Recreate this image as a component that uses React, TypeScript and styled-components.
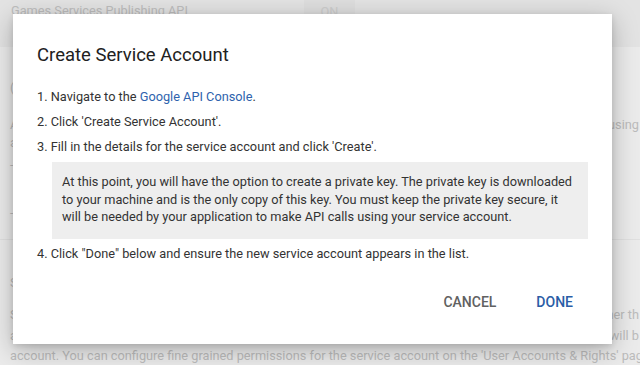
import React from 'react'
import styled, { createGlobalStyle } from 'styled-components'

const GlobalStyle = createGlobalStyle`
  html, body {
    margin: 0;
    padding: 0;
    width: 640px;
    height: 365px;
    overflow: hidden;
    background: #ebebeb;
    font-family: Roboto, 'Noto Sans', 'Liberation Sans', sans-serif;
  }
`

const Page = styled.div`
  position: relative;
  width: 640px;
  height: 365px;
  overflow: hidden;
  background: #ebebeb;
  color: #bcbcbc;
  font-size: 12.75px;
`

const ApiRow = styled.div`
  display: flex;
  align-items: flex-start;
  height: 47px;
  padding-left: 11px;
  background: #e3e3e3;
  box-sizing: border-box;
`

const ApiName = styled.span`
  width: 293px;
  line-height: 22px;
  color: #bdbdbd;
`

const OnCell = styled.span`
  display: flex;
  justify-content: center;
  width: 51px;
  height: 47px;
  line-height: 24px;
  background: #dedede;
  color: #cdcdcd;
`

const Section = styled.div`
  height: 193px;
  padding-left: 10px;
  border-bottom: 1px solid #e0e0e0;
  box-sizing: border-box;
  display: flex;
  flex-direction: column;
`

const BgLine = styled.div<{ $gap: number; $lh?: number }>`
  display: flex;
  justify-content: space-between;
  margin-top: ${(p) => p.$gap}px;
  line-height: ${(p) => p.$lh ?? 18}px;
  white-space: nowrap;
`

const Tail = styled.span`
  padding-right: 1px;
`

const Lower = styled.div`
  padding-left: 10px;
  display: flex;
  flex-direction: column;
`

const Overlay = styled.div`
  position: absolute;
  inset: 0;
  display: flex;
  align-items: flex-start;
  padding: 14px 0 0 13px;
`

const Dialog = styled.div`
  width: 599px;
  height: 330px;
  box-sizing: border-box;
  background: #ffffff;
  box-shadow: 0 6px 24px rgba(0, 0, 0, 0.26), 0 2px 6px rgba(0, 0, 0, 0.12);
  padding: 29px 0 0 24px;
  display: flex;
  flex-direction: column;
  overflow: hidden;
`

const Title = styled.h2`
  margin: 0;
  font-size: 18.5px;
  font-weight: 400;
  line-height: 24px;
  color: #212121;
`

const Steps = styled.div`
  margin-top: 21px;
  display: flex;
  flex-direction: column;
  color: #333333;
  font-size: 12.75px;
  line-height: 18px;
`

const Step = styled.div`
  margin-bottom: 7px;
  white-space: nowrap;
`

const Link = styled.a`
  color: #2e63ad;
  text-decoration: none;
`

const Note = styled.div`
  margin: -1px 0 6px 15px;
  width: 536px;
  box-sizing: border-box;
  background: #eeeeee;
  padding: 11px 10px 13px;
  line-height: 17.5px;
  color: #333333;
`

const NoteLine = styled.span`
  display: block;
  white-space: nowrap;
`

const Actions = styled.div`
  margin-top: 16px;
  padding-right: 23px;
  display: flex;
  justify-content: flex-end;
  gap: 8px;
`

const Button = styled.button<{ $primary?: boolean }>`
  border: none;
  background: none;
  padding: 8px 16px;
  font-family: Roboto, 'Noto Sans', 'Liberation Sans', sans-serif;
  font-size: 14px;
  font-weight: 500;
  line-height: 16px;
  text-transform: uppercase;
  color: ${(p) => (p.$primary ? '#2a5da6' : '#616161')};
  cursor: pointer;
`

export default function App() {
  return (
    <>
      <GlobalStyle />
      <Page>
        <ApiRow>
          <ApiName>Games Services Publishing API</ApiName>
          <OnCell>ON</OnCell>
        </ApiRow>
        <Section>
          <BgLine $gap={32}>(</BgLine>
          <BgLine $gap={19}>
            <span>A</span>
            <Tail>using</Tail>
          </BgLine>
          <BgLine $gap={0}>a</BgLine>
          <BgLine $gap={4}>-</BgLine>
          <BgLine $gap={30}>-</BgLine>
        </Section>
        <Lower>
          <BgLine $gap={34}>S</BgLine>
          <BgLine $gap={13} $lh={20.5}>
            <span>S</span>
            <Tail>ner th</Tail>
          </BgLine>
          <BgLine $gap={0} $lh={20.5}>
            <span>a</span>
            <Tail>will b</Tail>
          </BgLine>
          <BgLine $gap={0} $lh={20.5}>
            account. You can configure fine grained permissions for the service account on the 'User Accounts &amp;
            Rights' page
          </BgLine>
        </Lower>
        <Overlay>
          <Dialog>
            <Title>Create Service Account</Title>
            <Steps>
              <Step>
                1. Navigate to the <Link href="#">Google API Console</Link>.
              </Step>
              <Step>2. Click 'Create Service Account'.</Step>
              <Step>3. Fill in the details for the service account and click 'Create'.</Step>
              <Note>
                <NoteLine>
                  At this point, you will have the option to create a private key. The private key is downloaded
                </NoteLine>
                <NoteLine>
                  to your machine and is the only copy of this key. You must keep the private key secure, it
                </NoteLine>
                <NoteLine>will be needed by your application to make API calls using your service account.</NoteLine>
              </Note>
              <Step>4. Click "Done" below and ensure the new service account appears in the list.</Step>
            </Steps>
            <Actions>
              <Button>Cancel</Button>
              <Button $primary>Done</Button>
            </Actions>
          </Dialog>
        </Overlay>
      </Page>
    </>
  )
}
